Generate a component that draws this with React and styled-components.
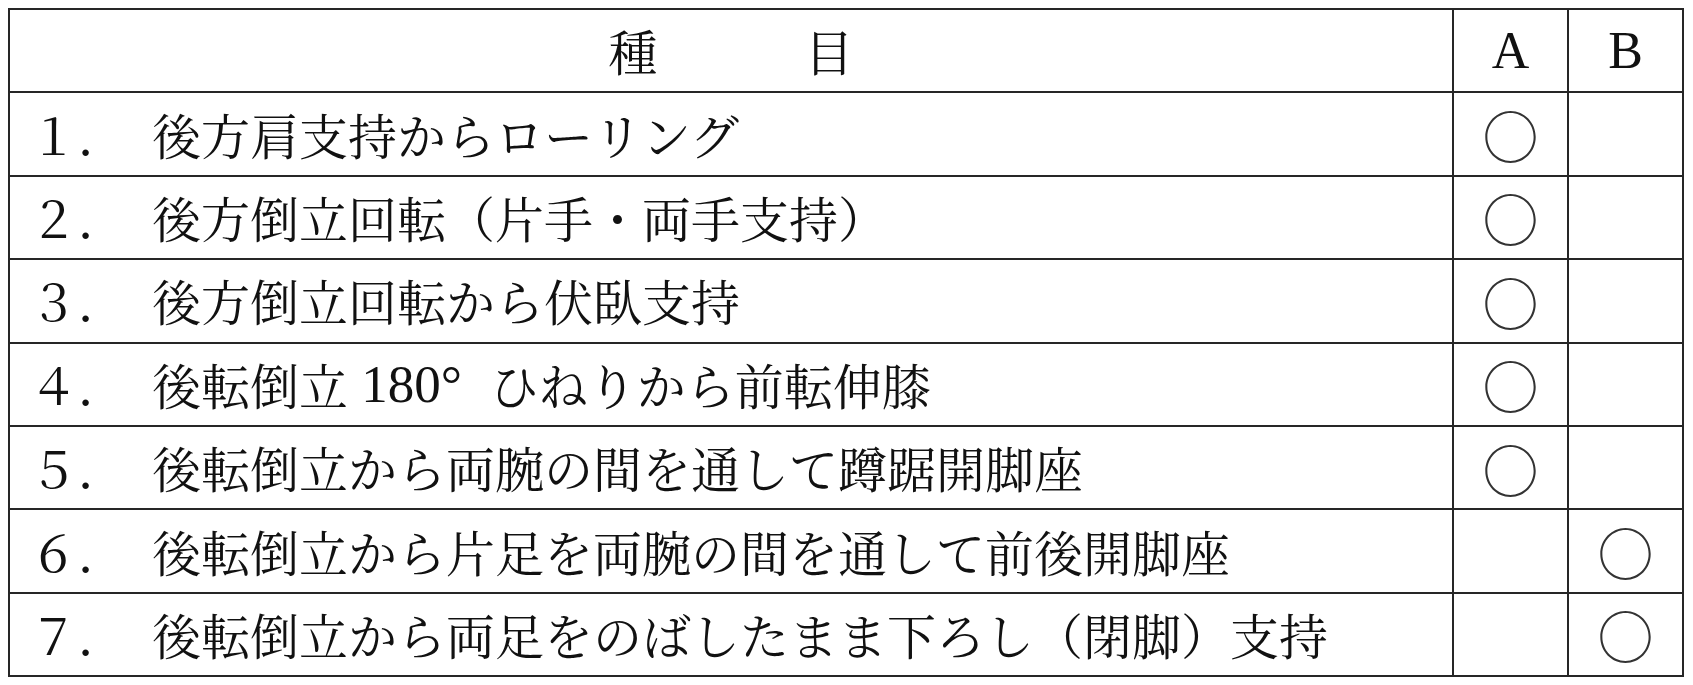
import React from "react";
import styled, { createGlobalStyle } from "styled-components";

const Global = createGlobalStyle`
  html, body { background: #ffffff; }
  body {
    margin: 8px;
    font-family: "Noto Serif CJK JP", "Noto Sans CJK JP", "Liberation Serif", serif;
    color: #111111;
  }
`;

const Table = styled.div`
  width: 1676px;
  border-top: 2px solid #262626;
  border-left: 2px solid #262626;
  display: flex;
  flex-direction: column;
  box-sizing: border-box;
`;

const Row = styled.div`
  display: grid;
  grid-template-columns: 1444px 115px 115px;
  height: 83.4px;
`;

const Cell = styled.div`
  box-sizing: border-box;
  border-right: 2px solid #262626;
  border-bottom: 2px solid #262626;
  display: flex;
  align-items: center;
  justify-content: ${(p) => (p.$center ? "center" : "flex-start")};
  padding-left: ${(p) => (p.$center ? "0" : "19px")};
  font-size: 49px;
  line-height: 1;
  white-space: pre;
`;

const HeadLabel = styled.span`
  font-size: 49px;
`;

const Letter = styled.span`
  font-family: "Liberation Serif", "Noto Serif CJK JP", serif;
  font-size: 52px;
`;

const Num = styled.span`
  display: inline-block;
  width: 123px;
`;

const Latin = styled.span`
  font-family: "Liberation Serif", serif;
  font-size: 53px;
`;

const Degree = styled.span`
  display: inline-block;
  width: 49px;
  font-family: "Liberation Serif", serif;
  font-size: 53px;
`;

const Mark = styled.span`
  font-family: "Noto Sans CJK JP", sans-serif;
  font-size: 56px;
  color: #333333;
  line-height: 1;
`;

const rows = [
  { n: "１．", t: ["後方肩支持からローリング"], a: true },
  { n: "２．", t: ["後方倒立回転（片手・両手支持）"], a: true },
  { n: "３．", t: ["後方倒立回転から伏臥支持"], a: true },
  {
    n: "４．",
    t: ["後転倒立", { latin: " 180" }, { deg: "°" }, "ひねりから前転伸膝"],
    a: true,
  },
  { n: "５．", t: ["後転倒立から両腕の間を通して蹲踞開脚座"], a: true },
  { n: "６．", t: ["後転倒立から片足を両腕の間を通して前後開脚座"], b: true },
  { n: "７．", t: ["後転倒立から両足をのばしたまま下ろし（閉脚）支持"], b: true },
];

function Part({ part }) {
  if (typeof part === "string") return <span>{part}</span>;
  if (part.latin) return <Latin>{part.latin}</Latin>;
  return <Degree>{part.deg}</Degree>;
}

export default function App() {
  return (
    <>
      <Global />
      <Table>
        <Row>
          <Cell $center>
            <HeadLabel>種　　　目</HeadLabel>
          </Cell>
          <Cell $center>
            <Letter>A</Letter>
          </Cell>
          <Cell $center>
            <Letter>B</Letter>
          </Cell>
        </Row>
        {rows.map((r, i) => (
          <Row key={i}>
            <Cell>
              <Num>{r.n}</Num>
              {r.t.map((part, j) => (
                <Part key={j} part={part} />
              ))}
            </Cell>
            <Cell $center>{r.a && <Mark>○</Mark>}</Cell>
            <Cell $center>{r.b && <Mark>○</Mark>}</Cell>
          </Row>
        ))}
      </Table>
    </>
  );
}
